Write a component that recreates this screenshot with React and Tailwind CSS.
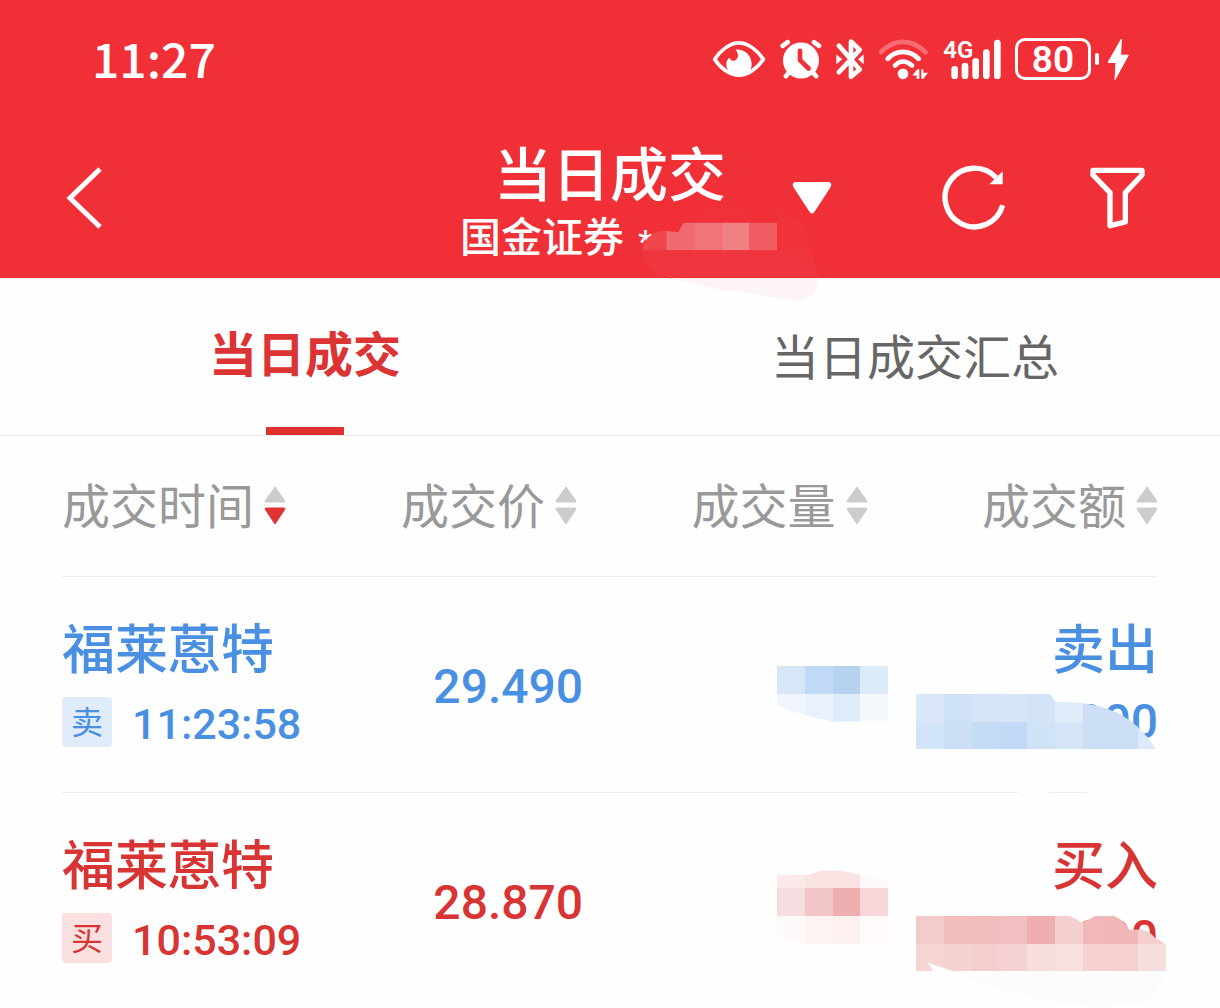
const columns = [
  { label: '成交时间', width: 'w-[20.5%]', sorted: 'desc' },
  { label: '成交价', width: 'w-[26.5%]' },
  { label: '成交量', width: 'w-[26.5%]' },
  { label: '成交额', width: 'w-[26.5%]' },
]

const trades = [
  { id: 1, name: '福莱蒽特', side: 'sell', time: '11:23:58', price: '29.490' },
  { id: 2, name: '福莱蒽特', side: 'buy', time: '10:53:09', price: '28.870' },
]

const sides = {
  sell: { tag: '卖', label: '卖出', text: 'text-[#4a90e2]', badge: 'bg-[#e1ecfb]' },
  buy: { tag: '买', label: '买入', text: 'text-[#d93434]', badge: 'bg-[#fae0e0]' },
}

// one row of mosaic blocks, drawn from left to right
function Blocks({ x, y, height, colors }) {
  return colors.map((color, i) => {
    const left = Math.round(x + i * 83.3)
    const right = Math.round(x + (i + 1) * 83.3)
    return <rect key={i} x={left} y={y} width={right - left} height={height} fill={color} />
  })
}

function SellMask() {
  return (
    <svg viewBox="0 0 1560 540" className="absolute top-[53px] -right-[22px] w-[520px] h-[180px] pointer-events-none" aria-hidden="true">
      <defs>
        <clipPath id="sell-volume">
          <path d="M351 108H685V275H518C460 262 410 250 351 228Z" />
        </clipPath>
        <clipPath id="sell-amount">
          <path d="M768 192H1168Q1178 198 1185 215C1330 214 1420 250 1488 357H768Z" />
        </clipPath>
      </defs>
      <path d="M768 357H1490Q1505 420 1494 484C1480 520 1330 520 1275 484H1168C1150 515 1090 505 1070 484L1040 445H768Z" fill="#fdfdfe" />
      <rect x="768" y="357" width="667" height="86" fill="#fbfdff" />
      <g clipPath="url(#sell-volume)" shapeRendering="crispEdges">
        <Blocks x={351} y={108} height={84} colors={['#d8e7f8', '#c0d9f5', '#b5d3f1', '#dcebf9']} />
        <Blocks x={351} y={192} height={84} colors={['#f1f6fd', '#e8f1fc', '#deecf9', '#f4f9fe']} />
      </g>
      <g clipPath="url(#sell-amount)" shapeRendering="crispEdges">
        <Blocks x={768} y={192} height={84} colors={['#d9e7f8', '#cfe1f7', '#d5e5f7', '#d7e6f7', '#d3e4f7', '#dfebf8', '#cddff6', '#ccdff6', '#cfe1f7']} />
        <Blocks x={768} y={275} height={83} colors={['#d2e4f8', '#cddff6', '#c3dcf4', '#c1d9f5', '#d0e2f8', '#d5e4f6', '#ccdff5', '#cbdef5', '#dce9f8']} />
      </g>
    </svg>
  )
}

function BuyMask() {
  return (
    <svg viewBox="0 0 1560 534" className="absolute top-[37px] -right-[22px] w-[520px] h-[178px] pointer-events-none" aria-hidden="true">
      <defs>
        <clipPath id="buy-volume">
          <path d="M351 134H450C480 115 550 120 602 134Q640 146 685 150V341H420L351 318Z" />
        </clipPath>
        <clipPath id="buy-amount">
          <path d="M768 258H1228Q1250 266 1265 278Q1285 270 1305 258H1362Q1395 272 1408 300Q1465 292 1485 324Q1505 332 1518 346V424H880L802 398Q815 410 818 424H768Z" />
        </clipPath>
      </defs>
      <path d="M60 120Q80 100 130 102L351 130V318L290 290Q240 250 100 235Q30 200 60 120Z" fill="#fefdfd" />
      <path d="M880 424H1515Q1500 490 1440 520Q1300 534 1200 520Q1000 480 880 424Z" fill="#fdfcfc" />
      <g clipPath="url(#buy-volume)" shapeRendering="crispEdges">
        <Blocks x={351} y={108} height={67} colors={['#fbe9e9', '#f9e2e2', '#f8e2e2', '#fdf7f7']} />
        <Blocks x={351} y={174} height={84} colors={['#f6dddf', '#f2c5c6', '#efafb0', '#f6d6d9']} />
        <Blocks x={351} y={258} height={84} colors={['#fcf9f8', '#fcf3f2', '#fcf0f0', '#fefaf9']} />
      </g>
      <g clipPath="url(#buy-amount)" shapeRendering="crispEdges">
        <Blocks x={768} y={258} height={84} colors={['#f4cbcb', '#f1bdbd', '#f0bcbc', '#f1bfbf', '#efafb0', '#f4cfcf', '#f1b8b8', '#f1b6b6', '#f5cfcf']} />
        <Blocks x={768} y={341} height={83} colors={['#f6d4d4', '#f6d3d3', '#f4cdcf', '#f5d2d3', '#f7dfdf', '#f7e0df', '#f5d1d1', '#f4d1d0', '#f8dfdf']} />
      </g>
    </svg>
  )
}

function AccountMask() {
  return (
    <svg viewBox="600 230 540 290" className="absolute top-0 left-[180px] w-[180px] h-[97px] pointer-events-none" aria-hidden="true">
      <defs>
        <clipPath id="account">
          <path d="M608 358Q612 315 660 302Q700 300 715 306Q722 288 732 276H1012V360H608Z" />
        </clipPath>
      </defs>
      <path d="M732 276Q760 236 830 234H928V276Z" fill="#f13139" />
      <path d="M1012 242L1090 272Q1110 320 1104 360H1012Z" fill="#f0333b" />
      <path d="M606 358H1104Q1130 385 1134 443H690Q606 430 606 358Z" fill="#ef353d" />
      <path d="M690 443H1134Q1130 500 1085 510Q1040 512 960 492L830 476Q760 455 690 443Z" fill="#fdf4f5" />
      <g clipPath="url(#account)">
        <rect x="600" y="270" width="79" height="90" fill="#f0474e" />
        <rect x="679" y="270" width="83" height="90" fill="#f06a70" />
        <rect x="762" y="270" width="83" height="90" fill="#f07478" />
        <rect x="845" y="270" width="84" height="90" fill="#f08084" />
        <rect x="929" y="270" width="83" height="90" fill="#ef5c62" />
      </g>
    </svg>
  )
}

function StatusBar() {
  return (
    <div className="flex items-center justify-between h-[118px] pl-[92px] pr-[91px]">
      <time className="pb-1 text-[48px] leading-none font-medium">11:27</time>
      <div className="flex items-center gap-3.5">
        <svg viewBox="36 57 162 122" className="w-[54px] h-[41px]" aria-hidden="true">
          <path d="M44 117C62 90 90 68 117 68S172 90 190 117C172 145 144 165 117 165S62 145 44 117Z" fill="none" stroke="currentColor" strokeWidth="11" strokeLinejoin="round" />
          <path d="M106 88C136 86 155 106 155 132C155 154 140 167 117 167C94 167 79 152 79 134C79 122 83 116 89 113C91 121 99 124 106 120C117 113 116 98 106 88Z" fill="currentColor" />
        </svg>
        <svg viewBox="242 57 126 122" className="w-[42px] h-[41px]" aria-hidden="true">
          <g fill="none" stroke="currentColor" strokeWidth="14" strokeLinecap="round">
            <path d="M250 77L265 66M344 66L359 77M268 158L260 168M342 158L350 168" />
          </g>
          <circle cx="305" cy="121" r="54" fill="currentColor" />
          <path d="M302 92V120L328 145" fill="none" stroke="#f12f37" strokeWidth="14" strokeLinejoin="round" strokeLinecap="round" />
        </svg>
        <svg viewBox="410 57 84 122" className="w-[28px] h-[41px]" aria-hidden="true">
          <path d="M419 77L481 148L455 170V127M455 107V64L481 89L419 156" fill="none" stroke="currentColor" strokeWidth="14" strokeLinejoin="round" strokeLinecap="round" />
          <path d="M411 103L429 117L411 132ZM493 103L476 117L493 132Z" fill="currentColor" />
        </svg>
        <svg viewBox="532 57 153 122" className="w-[51px] h-[41px]" aria-hidden="true">
          <g fill="none" stroke="currentColor" strokeWidth="14" strokeLinecap="round">
            <path d="M541 96Q570 65 607 65T674 96" opacity="0.3" />
            <path d="M561 116Q580 95 607 95T654 116" />
            <path d="M583 136Q594 124 607 124T634 136" />
          </g>
          <circle cx="607" cy="161" r="16" fill="currentColor" />
          <path d="M635 166L650 147H656V176H648V166ZM662 147H668V158H682L668 176H662Z" fill="currentColor" />
        </svg>
        <svg viewBox="728 45 174 147" className="w-[58px] h-[49px] overflow-visible" aria-hidden="true">
          <text x="729" y="115" fontSize="72" fontWeight="600" fill="currentColor" fontFamily="Roboto, sans-serif">4G</text>
          <g stroke="currentColor" strokeWidth="20" strokeLinecap="round">
            <path d="M763 148V167M794 138V167M826 124V167M858 98V167M891 69V167" />
          </g>
        </svg>
        <div className="flex items-center">
          <span className="flex items-center justify-center w-[76px] h-[42px] border-3 border-white rounded-[10px] font-[Roboto,sans-serif] text-[37px] leading-none font-semibold">80</span>
          <span className="w-1 h-3 ml-1 rounded-full bg-white" />
          <svg viewBox="1218 57 66 122" className="w-[22px] h-[41px] ml-2" aria-hidden="true">
            <path d="M1261 57L1221 127H1245L1242 178L1282 105H1259Z" fill="currentColor" stroke="currentColor" strokeWidth="3" />
          </svg>
        </div>
      </div>
    </div>
  )
}

function TitleBar() {
  return (
    <div className="grid grid-cols-[1fr_300px_1fr] h-40">
      <button type="button" aria-label="返回" className="justify-self-start self-center ml-16">
        <svg viewBox="0 0 40 64" className="w-10 h-16" fill="none" stroke="currentColor" strokeWidth="5">
          <path d="M36 3L6 32L36 61" />
        </svg>
      </button>
      <div className="pt-[27px] font-[Roboto,'Noto_Sans_CJK_SC',sans-serif] font-medium whitespace-nowrap">
        <h1 className="text-[58px] leading-[62px] text-center">当日成交</h1>
        <p className="relative text-[41px] leading-[62px]">
          国金证券 <span className="ml-1 text-[32px] leading-none">*</span>
          <AccountMask />
        </p>
      </div>
      <div className="flex items-center pl-8 pr-[75px]">
        <button type="button" aria-label="切换账户">
          <svg viewBox="0 0 40 32" className="w-10 h-8" fill="currentColor">
            <path d="M3 0H37Q41 1 38 6L23 29Q20 34 17 29L2 6Q-1 1 3 0Z" />
          </svg>
        </button>
        <button type="button" aria-label="刷新" className="ml-auto">
          <svg viewBox="126 74 192 198" className="w-16 h-[66px]">
            <path d="M308 195A88 88 0 1 1 288 112" fill="none" stroke="currentColor" strokeWidth="16" />
            <path d="M308 93V132H268Z" fill="currentColor" />
          </svg>
        </button>
        <button type="button" aria-label="筛选" className="ml-[84px]">
          <svg viewBox="570 74 165 198" className="w-[55px] h-[66px]" fill="none" stroke="currentColor" strokeWidth="16" strokeLinejoin="round">
            <path d="M579 90H726V104L676 157V245L630 256V157L579 104Z" />
          </svg>
        </button>
      </div>
    </div>
  )
}

function SortArrows({ sorted }) {
  return (
    <svg viewBox="0 0 22 40" className="w-[22px] h-10 shrink-0" aria-hidden="true">
      <path d="M11 1L21 15Q21 16 20 16H2Q1 16 1 15Z" fill="#ccc" stroke="#ccc" strokeLinejoin="round" />
      <path d="M11 38L21 23Q21 22 20 22H2Q1 22 1 23Z" fill={sorted ? '#e03434' : '#ccc'} stroke={sorted ? '#e03434' : '#ccc'} strokeLinejoin="round" />
    </svg>
  )
}

function TradeRow({ trade }) {
  const side = sides[trade.side]

  return (
    <tr className={`h-[216px] border-b border-[#eee] last:border-b-0 font-medium whitespace-nowrap ${side.text}`}>
      <td className="p-0 align-top pt-10">
        <div className="text-[53px] leading-[58px]">{trade.name}</div>
        <div className="flex items-center gap-5 mt-[22px]">
          <span className={`flex items-center justify-center shrink-0 w-[50px] h-[50px] pb-1 rounded-sm text-[32px] leading-none font-normal ${side.badge}`}>
            {side.tag}
          </span>
          <span className="pt-1 font-[Roboto,sans-serif] text-[43px] leading-[46px]">{trade.time}</span>
        </div>
      </td>
      <td className="p-0 text-right">
        <div className="-mr-1.5 pt-1.5 font-[Roboto,sans-serif] text-[48px] leading-[60px]">{trade.price}</div>
      </td>
      <td className="p-0" />
      <td className="relative p-0 align-top pt-10 text-right">
        <div className="text-[53px] leading-[58px]">{side.label}</div>
        <div className="mt-[22px] font-[Roboto,sans-serif] text-[48px] leading-[50px]">000</div>
        {trade.side === 'sell' ? <SellMask /> : <BuyMask />}
      </td>
    </tr>
  )
}

export default function App() {
  return (
    <div className="min-h-screen overflow-hidden bg-[#fefefe] font-['Noto_Sans_CJK_SC',sans-serif]">
      <header className="bg-[#f12f37] text-white">
        <StatusBar />
        <TitleBar />
      </header>

      <nav className="grid grid-cols-2 h-[158px] border-b border-[#eaeaea] text-[48px]">
        <button type="button" className="relative pb-3 font-bold text-[#dc3434]">
          当日成交
          <span className="absolute bottom-0 left-1/2 -translate-x-1/2 w-[78px] h-2 bg-[#e03131]" />
        </button>
        <button type="button" className="pb-1.5 text-[#666]">当日成交汇总</button>
      </nav>

      <main className="px-[62px]">
        <table className="w-full table-fixed border-collapse">
          <thead>
            <tr className="h-[140px] border-b border-[#eee]">
              {columns.map((col, i) => (
                <th key={col.label} className={`p-0 font-normal ${col.width}`}>
                  <button
                    type="button"
                    className={`flex items-center gap-2.5 text-[48px] text-[#999] whitespace-nowrap ${i > 0 ? 'ml-auto' : ''}`}
                  >
                    <span className="pb-1.5">{col.label}</span>
                    <SortArrows sorted={col.sorted} />
                  </button>
                </th>
              ))}
            </tr>
          </thead>
          <tbody>
            {trades.map((trade) => (
              <TradeRow key={trade.id} trade={trade} />
            ))}
          </tbody>
        </table>
      </main>
    </div>
  )
}
